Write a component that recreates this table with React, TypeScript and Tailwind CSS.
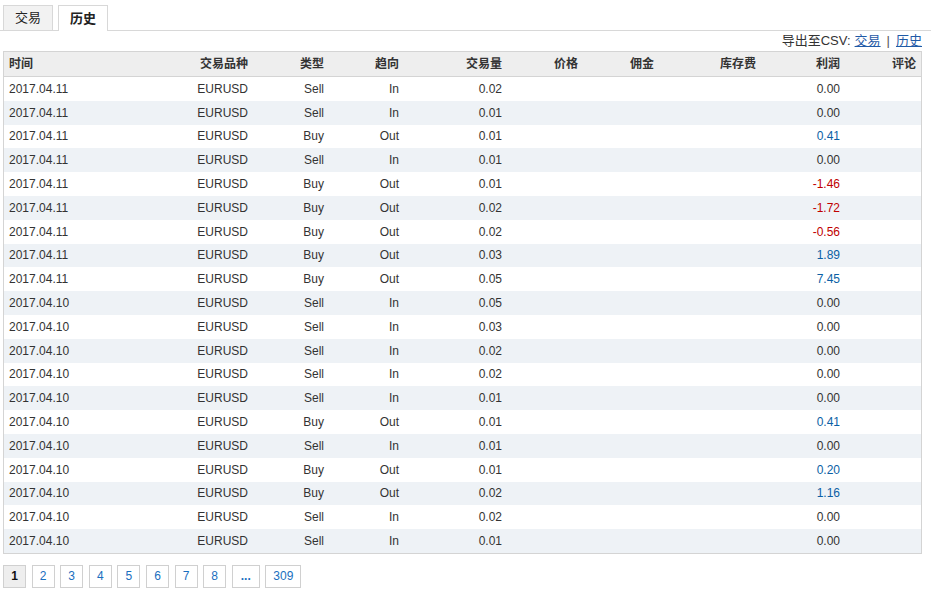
import React from "react";

type Row = { d: string; t: string; dir: string; v: string; p: string };

const rows: Row[] = [
  { d: "2017.04.11", t: "Sell", dir: "In", v: "0.02", p: "0.00" },
  { d: "2017.04.11", t: "Sell", dir: "In", v: "0.01", p: "0.00" },
  { d: "2017.04.11", t: "Buy", dir: "Out", v: "0.01", p: "0.41" },
  { d: "2017.04.11", t: "Sell", dir: "In", v: "0.01", p: "0.00" },
  { d: "2017.04.11", t: "Buy", dir: "Out", v: "0.01", p: "-1.46" },
  { d: "2017.04.11", t: "Buy", dir: "Out", v: "0.02", p: "-1.72" },
  { d: "2017.04.11", t: "Buy", dir: "Out", v: "0.02", p: "-0.56" },
  { d: "2017.04.11", t: "Buy", dir: "Out", v: "0.03", p: "1.89" },
  { d: "2017.04.11", t: "Buy", dir: "Out", v: "0.05", p: "7.45" },
  { d: "2017.04.10", t: "Sell", dir: "In", v: "0.05", p: "0.00" },
  { d: "2017.04.10", t: "Sell", dir: "In", v: "0.03", p: "0.00" },
  { d: "2017.04.10", t: "Sell", dir: "In", v: "0.02", p: "0.00" },
  { d: "2017.04.10", t: "Sell", dir: "In", v: "0.02", p: "0.00" },
  { d: "2017.04.10", t: "Sell", dir: "In", v: "0.01", p: "0.00" },
  { d: "2017.04.10", t: "Buy", dir: "Out", v: "0.01", p: "0.41" },
  { d: "2017.04.10", t: "Sell", dir: "In", v: "0.01", p: "0.00" },
  { d: "2017.04.10", t: "Buy", dir: "Out", v: "0.01", p: "0.20" },
  { d: "2017.04.10", t: "Buy", dir: "Out", v: "0.02", p: "1.16" },
  { d: "2017.04.10", t: "Sell", dir: "In", v: "0.02", p: "0.00" },
  { d: "2017.04.10", t: "Sell", dir: "In", v: "0.01", p: "0.00" },
];

const grid = "grid grid-cols-[250px_76px_75px_103px_76px_76px_102px_84px_75px]";

function profitColor(p: string) {
  if (p.startsWith("-")) return "text-[#c00000]";
  if (p === "0.00") return "text-[#333333]";
  return "text-[#0b5fa5]";
}

export default function App() {
  const font = { fontFamily: '"Liberation Sans", "Noto Sans CJK SC", sans-serif' };
  return (
    <div className="w-[931px] h-[590px] bg-white text-[12px] text-[#333333]" style={font}>
      {/* Tabs */}
      <div className="flex items-end gap-[5px] pl-[3px] pt-[5px] h-[31px] border-b border-[#d8d8d8]">
        <div className="w-[50px] h-[25px] flex items-center justify-center bg-[#f2f2f2] border border-b-0 border-[#d8d8d8] text-[13px] text-[#222]">
          交易
        </div>
        <div className="w-[50px] h-[26px] -mb-px flex items-center justify-center bg-white border border-b-0 border-[#d8d8d8] text-[13px] font-bold text-[#222]">
          历史
        </div>
      </div>

      {/* Export */}
      <div className="flex justify-end items-center h-[20px] pr-[9px] text-[13px]">
        <span>导出至CSV:</span>
        <a className="ml-[4px] text-[#1f5aa6] underline">交易</a>
        <span className="mx-[6px] text-[#555]">|</span>
        <a className="text-[#1f5aa6] underline">历史</a>
      </div>

      {/* Table */}
      <div className="ml-[3px] w-[919px] border border-[#d4d4d4]">
        <div className={`${grid} h-[25px] items-center bg-[#eeeeee] border-b border-[#d4d4d4] font-bold`}>
          <div className="pl-[5px] pr-[6px] flex justify-between">
            <span>时间</span>
            <span>交易品种</span>
          </div>
          <div className="text-right pr-[6px]">类型</div>
          <div className="text-right pr-[6px]">趋向</div>
          <div className="text-right pr-[6px]">交易量</div>
          <div className="text-right pr-[6px]">价格</div>
          <div className="text-right pr-[6px]">佣金</div>
          <div className="text-right pr-[6px]">库存费</div>
          <div className="text-right pr-[6px]">利润</div>
          <div className="text-right pr-[5px]">评论</div>
        </div>
        {rows.map((r, i) => (
          <div
            key={i}
            className={`${grid} h-[23.8px] items-center ${i % 2 === 1 ? "bg-[#eef2f6]" : "bg-white"}`}
          >
            <div className="pl-[5px] flex justify-between pr-[6px]">
              <span>{r.d}</span>
              <span>EURUSD</span>
            </div>
            <div className="text-right pr-[6px]">{r.t}</div>
            <div className="text-right pr-[6px]">{r.dir}</div>
            <div className="text-right pr-[6px]">{r.v}</div>
            <div></div>
            <div></div>
            <div></div>
            <div className={`text-right pr-[6px] ${profitColor(r.p)}`}>{r.p}</div>
            <div></div>
          </div>
        ))}
      </div>

      {/* Pagination */}
      <div className="flex gap-[5.6px] pl-[3px] mt-[11px]">
        {["1", "2", "3", "4", "5", "6", "7", "8", "...", "309"].map((p, i) => (
          <div
            key={p}
            className={`h-[23px] px-[7px] min-w-[23px] flex items-center justify-center border border-[#d0d0d0] ${
              i === 0 ? "bg-[#eeeeee] text-[#111] font-bold" : "bg-white text-[#1a6fc0]"
            } ${p === "..." ? "w-[28px] font-bold" : ""}`}
          >
            {p}
          </div>
        ))}
      </div>
    </div>
  );
}
